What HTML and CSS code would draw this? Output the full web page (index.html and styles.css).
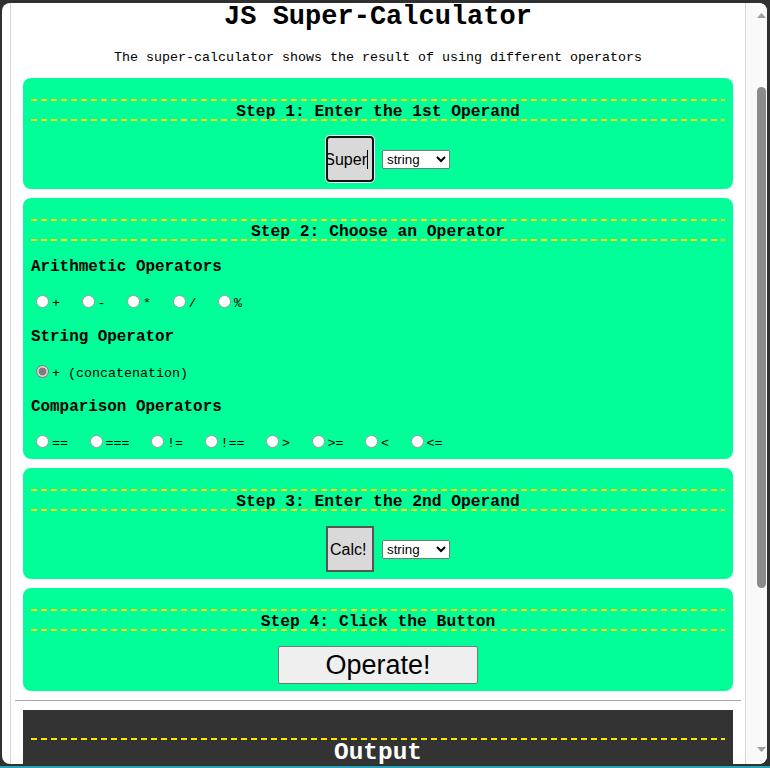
FILE: index.html
```html
<!DOCTYPE html>
<html lang="en">
<head>
<meta charset="utf-8">
<title>JS Super-Calculator</title>
<link rel="stylesheet" href="styles.css">
</head>
<body>
<div class="window">
  <div class="page">
    <div class="container">
      <h1 class="title">JS Super-Calculator</h1>
      <p class="subtitle">The super-calculator shows the result of using different operators</p>

      <section class="card">
        <h2 class="step">Step 1: Enter the 1st Operand</h2>
        <div class="operand-row">
          <div class="textbox focused"><span class="value caret">Super</span></div>
          <select class="type"><option>string</option><option>number</option><option>boolean</option></select>
        </div>
      </section>

      <section class="card card-ops">
        <h2 class="step">Step 2: Choose an Operator</h2>
        <h3 class="group">Arithmetic Operators</h3>
        <div class="radios">
          <input type="radio" name="op" disabled><span class="lbl">+</span>
          <input type="radio" name="op" disabled><span class="lbl">-</span>
          <input type="radio" name="op" disabled><span class="lbl">*</span>
          <input type="radio" name="op" disabled><span class="lbl">/</span>
          <input type="radio" name="op" disabled><span class="lbl">%</span>
        </div>
        <h3 class="group">String Operator</h3>
        <div class="radios">
          <input type="radio" name="op" checked disabled><span class="lbl">+ (concatenation)</span>
        </div>
        <h3 class="group">Comparison Operators</h3>
        <div class="radios">
          <input type="radio" name="op" disabled><span class="lbl">==</span>
          <input type="radio" name="op" disabled><span class="lbl">===</span>
          <input type="radio" name="op" disabled><span class="lbl">!=</span>
          <input type="radio" name="op" disabled><span class="lbl">!==</span>
          <input type="radio" name="op" disabled><span class="lbl">&gt;</span>
          <input type="radio" name="op" disabled><span class="lbl">&gt;=</span>
          <input type="radio" name="op" disabled><span class="lbl">&lt;</span>
          <input type="radio" name="op" disabled><span class="lbl">&lt;=</span>
        </div>
      </section>

      <section class="card">
        <h2 class="step">Step 3: Enter the 2nd Operand</h2>
        <div class="operand-row">
          <div class="textbox plain"><span class="value">Calc!</span></div>
          <select class="type"><option>string</option><option>number</option><option>boolean</option></select>
        </div>
      </section>

      <section class="card">
        <h2 class="step">Step 4: Click the Button</h2>
        <div class="button-row">
          <button class="operate" type="button">Operate!</button>
        </div>
      </section>

      <hr class="rule">

      <section class="output">
        <h2 class="output-title">Output</h2>
      </section>
    </div>
  </div>
  <div class="scrollbar">
    <div class="arrow up"></div>
    <div class="thumb"></div>
    <div class="arrow down"></div>
  </div>
</div>
</body>
</html>
```

FILE: styles.css
```css
html, body {
  margin: 0;
  padding: 0;
}

body {
  width: 770px;
  height: 768px;
  box-sizing: border-box;
  padding: 3px 3px 2px 2px;
  background: #303030;
  border-bottom: 2px solid #2aa3b8;
  overflow: hidden;
  font-family: "Liberation Mono", "Courier New", monospace;
  color: #000;
}

.window {
  display: flex;
  height: 761px;
  background: #fff;
  border-radius: 8px;
  overflow: hidden;
}

.page {
  width: 744px;
  flex: none;
  padding-left: 8px;
  box-sizing: border-box;
}

.container {
  width: 736px;
  height: 100%;
  box-sizing: border-box;
  border-left: 1px solid #d6d6d6;
  border-right: 1px solid #d6d6d6;
  padding: 0 4px;
  overflow: hidden;
}

.title {
  margin: -1px 0 0;
  text-align: center;
  font-size: 27px;
  line-height: 30px;
  font-weight: bold;
}

.subtitle {
  margin: 17.5px 0 0;
  text-align: center;
  font-size: 13.33px;
  line-height: 15px;
}

.card {
  background: #00ff99;
  border-radius: 8px;
  margin: 0 8px 9px;
  padding: 21px 8px 7px;
}

.subtitle + .card {
  margin-top: 13.5px;
}

.card-ops {
  padding-bottom: 8px;
}

.step,
.output-title {
  margin: 0;
  text-align: center;
  font-weight: bold;
  background:
    repeating-linear-gradient(90deg, #ffe600 0 6px, transparent 6px 10px) top left / 100% 2px no-repeat,
    repeating-linear-gradient(90deg, #ffe600 0 6px, transparent 6px 10px) bottom left / 100% 2px no-repeat;
}

.step {
  font-size: 16.3px;
  line-height: 18px;
  padding: 4px 0 0;
}

.operand-row {
  display: flex;
  align-items: center;
  justify-content: center;
  gap: 8px;
  height: 46px;
  margin-top: 15px;
  padding-left: 20px;
}

.textbox {
  width: 48px;
  height: 46px;
  box-sizing: border-box;
  display: flex;
  align-items: center;
  overflow: hidden;
  background: #d9d9d9;
  font-family: "Liberation Sans", Arial, sans-serif;
  font-size: 16px;
  white-space: nowrap;
}

.textbox.focused {
  border: 2px solid #101010;
  border-radius: 4px;
  box-shadow: 0 0 0 1px #ffffff;
  justify-content: flex-end;
  padding-right: 4px;
}

.textbox.plain {
  border: 2px solid #555555;
  padding-left: 2px;
}

.value {
  flex: none;
  line-height: 19px;
}

.caret {
  border-right: 1px solid #000;
}

.type {
  width: 68px;
  height: 19px;
  margin: 0;
  font-family: "Liberation Sans", Arial, sans-serif;
  font-size: 13.33px;
}

.group {
  margin: 16px 0 0;
  padding-top: 1px;
  font-size: 15.9px;
  line-height: 18px;
  font-weight: bold;
}

.radios {
  display: flex;
  align-items: center;
  height: 19px;
  margin-top: 16px;
}

.radios input {
  -webkit-appearance: none;
  appearance: none;
  box-sizing: border-box;
  width: 13px;
  height: 13px;
  margin: 0 3px 0 5px;
  flex: none;
  border: 1px solid #9a9a9a;
  border-radius: 50%;
  background: #fff;
}

.radios input:checked {
  border-color: #7b7b7b;
  background: radial-gradient(circle, #7e7e7e 0 3.6px, #d4d4d4 4.2px);
}

.lbl {
  font-size: 13.33px;
  line-height: 15px;
  margin-right: 16.5px;
  padding-top: 3px;
  white-space: pre;
}

.button-row {
  display: flex;
  justify-content: center;
  margin-top: 15px;
}

.operate {
  width: 200px;
  height: 38px;
  margin: 0;
  padding: 0;
  background: #efefef;
  border: 1px solid #767676;
  border-radius: 2px;
  font-family: "Liberation Sans", Arial, sans-serif;
  font-size: 27px;
  color: #000;
}

.rule {
  margin: 0 0 9px;
  border: 0;
  border-top: 1px solid #a8a8a8;
  height: 0;
}

.output {
  margin: 0 8px;
  background: #333333;
  padding: 28px 8px 20px;
}

.output-title {
  color: #fff;
  font-size: 24.4px;
  line-height: 24px;
  padding: 3px 0 6px;
}

.scrollbar {
  width: 21px;
  flex: none;
  background: #f9f9f9;
  box-sizing: border-box;
  padding: 10px 1px 0 11px;
  display: flex;
  flex-direction: column;
  align-items: stretch;
}

.arrow {
  height: 5px;
  background: #a0a0a0;
}

.arrow.up {
  clip-path: polygon(50% 0, 100% 100%, 0 100%);
}

.arrow.down {
  margin-top: 159px;
  clip-path: polygon(0 0, 100% 0, 50% 100%);
}

.thumb {
  margin-top: 69px;
  height: 501px;
  background: #8b8b8b;
  border-radius: 4.5px;
}
```
